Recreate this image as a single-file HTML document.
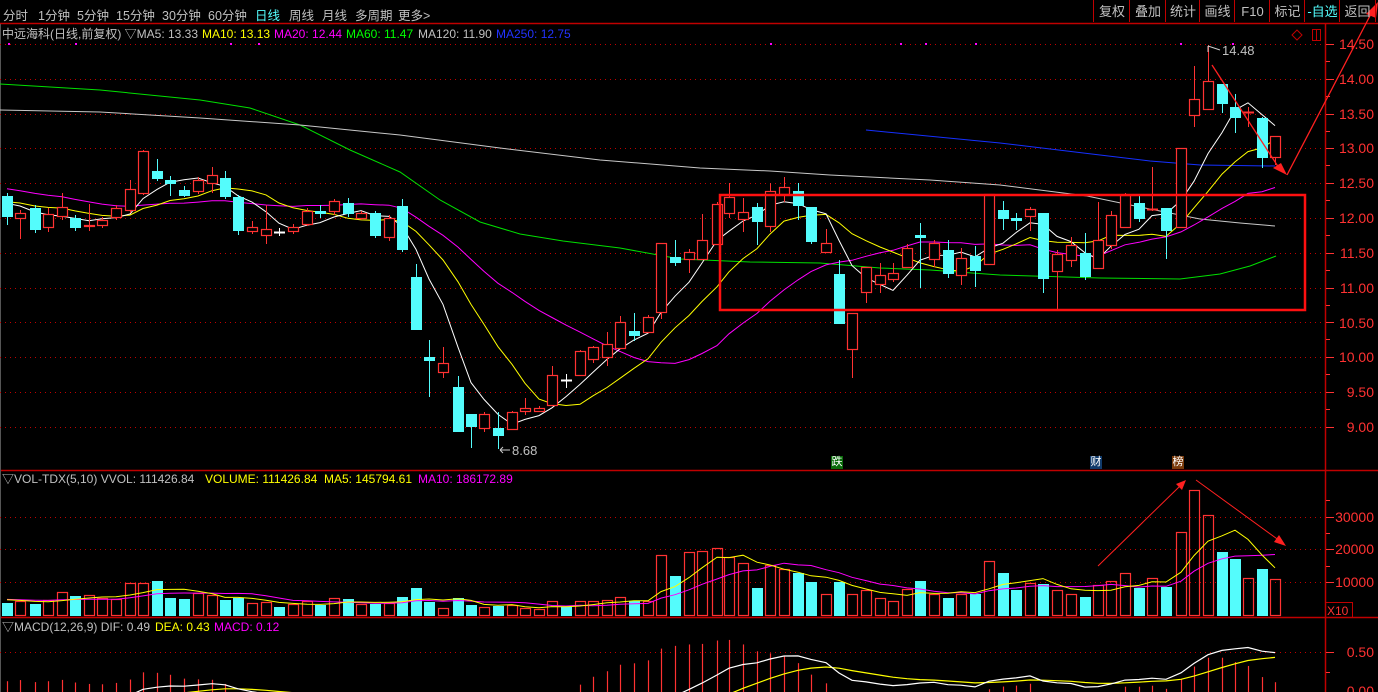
<!DOCTYPE html>
<html><head><meta charset="utf-8">
<style>
html,body{margin:0;padding:0;background:#000;width:1378px;height:692px;overflow:hidden}
body{position:relative;font-family:"Liberation Sans","Noto Sans CJK SC",sans-serif}
.t{position:absolute;font-size:12px;line-height:14px;white-space:nowrap;color:#c0c0c0}
.m{position:absolute;font-size:12.5px;top:5px;color:#c0c0c0;white-space:nowrap}
.b{position:absolute;top:0;height:22px;border-left:1px solid #c00000;color:#c0c0c0;font-size:13px;line-height:24px;text-align:center}
.ax{position:absolute;font-size:14px;color:#ff3232;left:1338px;width:36px;text-align:right;line-height:14px}
.bd{position:absolute;font-size:11px;line-height:13px;width:12px;height:13px;color:#fff;text-align:center}
svg{position:absolute;left:0;top:0}
</style></head><body>
<svg id="s" width="1378" height="692" xmlns="http://www.w3.org/2000/svg"></svg>
<div class="m" style="left:3px">分时</div>
<div class="m" style="left:38px">1分钟</div>
<div class="m" style="left:77px">5分钟</div>
<div class="m" style="left:116px">15分钟</div>
<div class="m" style="left:162px">30分钟</div>
<div class="m" style="left:208px">60分钟</div>
<div class="m" style="left:255px;color:#54ffff">日线</div>
<div class="m" style="left:289px">周线</div>
<div class="m" style="left:322px">月线</div>
<div class="m" style="left:355px">多周期</div>
<div class="m" style="left:398px">更多&gt;</div>
<div class="b" style="left:1093px;width:36px">复权</div>
<div class="b" style="left:1129px;width:36px">叠加</div>
<div class="b" style="left:1165px;width:34px">统计</div>
<div class="b" style="left:1199px;width:35px">画线</div>
<div class="b" style="left:1234px;width:35px">F10</div>
<div class="b" style="left:1269px;width:35px">标记</div>
<div class="b" style="left:1304px;width:35px;color:#54ffff">-自选</div>
<div class="b" style="left:1339px;width:35px;border-right:1px solid #c00000">返回</div>

<div class="t" style="left:2px;top:27px">中远海科(日线,前复权) ▽MA5: 13.33</div>
<div class="t" style="left:202px;top:27px;color:#ffff00">MA10: 13.13</div>
<div class="t" style="left:274px;top:27px;color:#ff00ff">MA20: 12.44</div>
<div class="t" style="left:346px;top:27px;color:#00ff00">MA60: 11.47</div>
<div class="t" style="left:418px;top:27px">MA120: 11.90</div>
<div class="t" style="left:496px;top:27px;color:#2233ff">MA250: 12.75</div>

<div class="t" style="left:1222px;top:44px;font-size:13px">14.48</div>
<div class="t" style="left:512px;top:444px;font-size:13px">8.68</div>

<div class="bd" style="left:831px;top:456px;background:#0a6a0a">跌</div>
<div class="bd" style="left:1090px;top:456px;background:#103a6a">财</div>
<div class="bd" style="left:1172px;top:456px;background:#7a3a0a">榜</div>

<div class="t" style="left:2px;top:472px">▽VOL-TDX(5,10) VVOL: 111426.84</div>
<div class="t" style="left:205px;top:472px;color:#ffff00">VOLUME: 111426.84 &nbsp;MA5: 145794.61</div>
<div class="t" style="left:418px;top:472px;color:#ff00ff">MA10: 186172.89</div>

<div class="t" style="left:2px;top:620px">▽MACD(12,26,9) DIF: 0.49</div>
<div class="t" style="left:155px;top:620px;color:#ffff00">DEA: 0.43</div>
<div class="t" style="left:214px;top:620px;color:#ff00ff">MACD: 0.12</div>

<div class="ax" style="top:37px">14.50</div>
<div class="ax" style="top:72px">14.00</div>
<div class="ax" style="top:107px">13.50</div>
<div class="ax" style="top:141px">13.00</div>
<div class="ax" style="top:176px">12.50</div>
<div class="ax" style="top:211px">12.00</div>
<div class="ax" style="top:246px">11.50</div>
<div class="ax" style="top:281px">11.00</div>
<div class="ax" style="top:316px">10.50</div>
<div class="ax" style="top:350px">10.00</div>
<div class="ax" style="top:385px">9.50</div>
<div class="ax" style="top:420px">9.00</div>
<div class="ax" style="top:510px;left:1326px;width:48px">30000</div>
<div class="ax" style="top:542px;left:1326px;width:48px">20000</div>
<div class="ax" style="top:575px;left:1326px;width:48px">10000</div>
<div class="ax" style="top:604px;left:1327px;width:24px;text-align:left;font-size:12px">X10</div>
<div class="ax" style="top:645px">0.50</div>
<div class="ax" style="top:684px;height:8px;overflow:hidden">0.00</div>

<script>
var C=[[7,'c',196,217,193,225],[20,'r',213,218,210,239],[35,'c',208,230,205,233],[48,'r',214,227,208,232],[62,'r',207,216,193,220],[75,'c',218,228,215,231],[89,'r',225,225,204,231],[102,'r',220,225,217,228],[116,'r',208,217,205,220],[130,'r',189,210,180,213],[143,'r',151,193,150,195],[157,'c',171,179,159,181],[170,'c',180,184,176,196],[184,'c',190,196,186,197],[198,'r',180,191,177,194],[212,'r',175,183,167,193],[225,'c',178,197,171,199],[238,'c',197,231,195,235],[252,'r',227,231,221,234],[266,'r',229,235,205,244],[279,'w',232,232,228,236],[293,'r',227,231,224,234],[307,'r',211,224,208,226],[320,'c',211,214,205,218],[334,'r',201,211,199,215],[348,'c',203,214,198,217],[361,'r',213,218,211,220],[375,'c',213,236,211,238],[389,'r',218,237,215,241],[402,'c',206,250,199,252],
[416,'c',277,330,264,330],[429,'c',357,361,340,397],[443,'r',363,372,347,378],[458,'c',387,432,376,432],[471,'c',414,427,414,448],[484,'r',414,428,412,432],[498,'c',428,436,412,449],[512,'r',412,429,411,430],[525,'r',408,411,398,415],[539,'r',408,411,406,412],[552,'r',375,405,366,405],[566,'w',380,380,374,388],[580,'r',351,375,350,376],[593,'r',347,359,346,363],[607,'r',344,357,332,366],[620,'r',322,348,316,348],[634,'c',331,336,313,341],[648,'r',317,332,315,332],[661,'r',243,312,243,319],[675,'c',257,263,240,266],
[689,'r',252,259,249,273],[702,'r',240,259,214,259],[717,'r',204,244,202,244],[729,'r',197,213,183,218],[743,'r',212,219,198,232],[757,'c',207,222,203,245],[770,'r',191,226,183,232],[784,'r',187,194,177,202],[798,'c',191,206,183,220],[811,'c',207,242,207,244],[826,'r',243,252,229,252],[839,'c',274,324,260,324],[852,'r',313,349,313,378],[866,'r',267,292,267,303],[880,'r',275,284,263,293],[893,'r',273,279,263,282],[907,'r',248,267,244,267],[920,'c',235,238,223,288],
[934,'r',243,259,240,267],[948,'c',250,274,240,278],[961,'r',258,275,248,285],[975,'c',256,271,246,287],[989,'r',194,264,194,264],[1003,'c',210,219,201,230],[1016,'c',218,221,213,230],[1030,'r',209,216,207,231],[1043,'c',213,279,213,293],[1057,'r',254,271,250,310],[1071,'r',245,260,237,267],[1085,'c',253,277,233,280],[1098,'r',240,268,202,268],[1111,'r',215,245,211,249],[1125,'r',195,227,193,227],[1139,'c',203,219,196,222],[1152,'rw',209,209,167,211],[1166,'c',208,231,208,259],
[1181,'r',148,227,148,227],[1194,'r',99,115,66,127],[1208,'r',81,109,45,109],[1222,'c',84,104,84,113],[1235,'c',107,118,94,133],[1248,'rw',112,112,107,127],[1262,'c',118,158,117,168],[1275,'r',136,157,136,165]];
var V=[13,14,12,15,23,20,20,17,16,32,32,35,18,17,22,20,16,18,12,13,9,11,14,11,17,17,11,12,12,19,
28,14,7,18,11,8,10,10,7,6,14,9,14,14,15,18,15,14,60,40,
63,64,67,58,52,28,50,46,43,34,21,34,21,25,17,14,26,35,
21,18,21,22,54,43,26,32,32,25,21,19,30,34,42,28,37,29,
83,125,100,64,57,37,47,36];
var R='#ff3232',CY='#54fcfc',o='';
function L(x1,y1,x2,y2,c,w,d){return '<line x1="'+x1+'" y1="'+y1+'" x2="'+x2+'" y2="'+y2+'" stroke="'+c+'" stroke-width="'+(w||1)+'"'+(d?' stroke-dasharray="'+d+'"':'')+'/>';}
function P(pts,c,w){return '<polyline fill="none" stroke="'+c+'" stroke-width="'+(w||1)+'" points="'+pts.map(function(p){return p[0]+','+p[1]}).join(' ')+'"/>';}
o+=L(0,23.5,1378,23.5,'#c00000',1.5);
o+=L(0,470.5,1378,470.5,'#c00000',1.5);
o+=L(0,617.5,1378,617.5,'#c00000',1.5);
o+=L(1325.5,24,1325.5,692,'#c00000',1.5);
o+=L(0.5,24,0.5,692,'#555',1);
for(var k=0;k<12;k++){var y=Math.round(44+k*34.8)+.5;o+=L(0,y,1325,y,'#c00000',1,'1,4');o+=L(1326,y,1334,y,R,1);if(k<11)o+=L(1326,y+17,1330,y+17,R,1);}
[517,549,582].forEach(function(y){o+=L(0,y+.5,1325,y+.5,'#c00000',1,'1,4');o+=L(1326,y+.5,1334,y+.5,R,1);});
o+=L(1326,566.5,1330,566.5,R,1);o+=L(1326,533.5,1330,533.5,R,1);o+=L(1326,500.5,1330,500.5,R,1);
o+=L(0,652.5,1325,652.5,'#c00000',1,'1,4');o+=L(1326,652.5,1334,652.5,R,1);o+=L(1326,672.5,1330,672.5,R,1);
o+='<rect x="1325.5" y="602.5" width="27" height="15" fill="none" stroke="#c00000"/>';
[8,75,230,258,770,900,925,975,1180,1232].forEach(function(x){o+='<rect x="'+x+'" y="43" width="2" height="2" fill="#ff00ff"/>';});
o+='<path d="M1297 30 L1302 35 L1297 40 L1292 35Z" fill="none" stroke="#c00000"/><rect x="1312.5" y="29.5" width="8" height="11" fill="none" stroke="#c00000"/><line x1="1316.5" y1="30" x2="1316.5" y2="40" stroke="#c00000"/>';
o+=P([[0,84],[100,90],[200,100],[250,108],[300,125],[350,150],[400,172],[440,200],[480,222],[520,234],[563,241],[620,248],[680,259],[750,262],[820,263],[880,268],[930,270],[1000,275],[1100,278],[1180,279],[1220,274],[1250,266],[1276,256]],'#00e000');
o+=P([[0,110],[100,112],[200,118],[300,125],[400,135],[500,148],[600,160],[700,168],[770,171],[830,175],[930,180],[1000,185],[1087,196],[1140,207],[1200,219],[1240,223],[1275,226]],'#c8c8c8');
o+=P([[866,130],[1000,143],[1100,155],[1150,161],[1200,165],[1275,166]],'#1530ff');
var cl=C.map(function(c){return c[1]=='c'?c[3]:c[2];});
var pad=[];for(var i=0;i<10;i++)pad.push(176);for(i=0;i<9;i++)pad.push(200);
var all=pad.concat(cl),off=pad.length;
function ma(n){return C.map(function(c,i){var s=0;for(var j=0;j<n;j++)s+=all[off+i-j];return [c[0],(s/n).toFixed(1)];});}
o+=P(ma(20),'#ff00ff');o+=P(ma(10),'#ffff00');o+=P(ma(5),'#ffffff');
C.forEach(function(c){var x=c[0],t=c[1];
 if(t=='w'||t=='rw'){var col=t=='w'?'#fff':R;o+=L(x+.5,c[4],x+.5,c[5],col);o+=L(x-5,c[2]+.5,x+6,c[2]+.5,col,2);return;}
 if(t=='r'){o+=L(x+.5,c[4],x+.5,c[2],R);o+=L(x+.5,c[3],x+.5,c[5],R);o+='<rect x="'+(x-5+.5)+'" y="'+(c[2]+.5)+'" width="10" height="'+Math.max(1,c[3]-c[2])+'" fill="#000" stroke="'+R+'" stroke-width="1.2"/>';}
 else{o+=L(x+.5,c[4],x+.5,c[5],CY);o+='<rect x="'+(x-5)+'" y="'+c[2]+'" width="11" height="'+Math.max(2,c[3]-c[2])+'" fill="'+CY+'"/>';}
});
o+='<rect x="720" y="195" width="585" height="115" fill="none" stroke="#ff1010" stroke-width="2.5"/>';
o+=L(1208,46,1208,52,'#ccc');o+=L(1208,46,1220,50,'#ccc');
o+=L(500,450,510,450,'#ccc');o+=L(500,450,503,447,'#ccc');o+=L(500,450,503,453,'#ccc');
o+=L(1212,65,1279,168,'#ff2020',1.3);o+='<path d="M1287 175 L1273 168 L1281 163Z" fill="#ff2020"/>';
o+=L(1287,175,1372,12,'#ff2020',1.3);o+='<path d="M1378 2 L1366 14 L1376 18Z" fill="#ff2020"/>';
C.forEach(function(c,i){var h=V[i]||10,x=c[0],t=c[1];
 if(t=='r'||t=='rw')o+='<rect x="'+(x-5+.5)+'" y="'+(615.5-h)+'" width="10" height="'+h+'" fill="none" stroke="'+R+'" stroke-width="1.2"/>';
 else o+='<rect x="'+(x-5)+'" y="'+(616-h)+'" width="11" height="'+h+'" fill="'+CY+'"/>';});
var vp=[];for(i=0;i<10;i++)vp.push(17);var va=vp.concat(V);
function vma(n){return C.map(function(c,i){var s=0;for(var j=0;j<n;j++)s+=va[10+i-j];return [c[0],(616-s/n).toFixed(1)];});}
o+=P(vma(10),'#ff00ff');o+=P(vma(5),'#ffff00');
o+=L(1098,566,1180,486,'#ff2020',1);o+='<path d="M1186 480 L1176 484 L1182 490Z" fill="#ff2020"/>';
o+=L(1196,480,1280,541,'#ff2020',1);o+='<path d="M1286 546 L1274 542 L1279 535Z" fill="#ff2020"/>';
var pr=cl.map(function(y){return 14.5-(y-44)/69.6;});
var e12=pr[0]-0.1,e26=pr[0]+0.12,dea=-0.28,dif=[],de=[],mc=[];
pr.forEach(function(p){e12=e12+(p-e12)*2/13;e26=e26+(p-e26)*2/27;var d=e12-e26;dea=dea+(d-dea)*2/10;dif.push(d);de.push(dea);mc.push(2*(d-dea));});
C.forEach(function(c,i){var v=mc[i];var y=692-v*80;o+=L(c[0]+.5,692,c[0]+.5,y,v>=0?R:CY,1.2);});
o+=P(C.map(function(c,i){return [c[0],(692-de[i]*80).toFixed(1)];}),'#ffff00',1.2);
o+=P(C.map(function(c,i){return [c[0],(692-dif[i]*80).toFixed(1)];}),'#ffffff',1.2);
document.getElementById('s').innerHTML=o;
</script>
</body></html>
